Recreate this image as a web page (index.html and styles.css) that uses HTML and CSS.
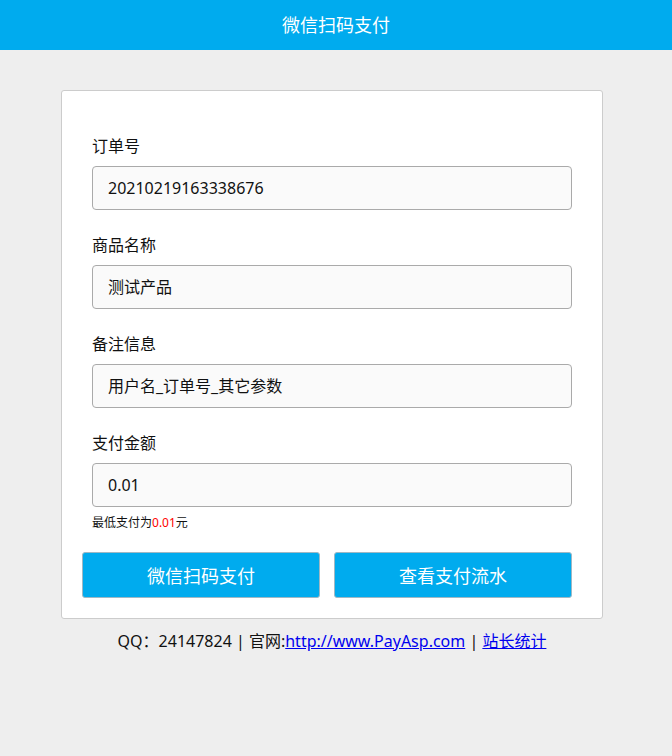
FILE: index.html
```html
<!DOCTYPE html>
<html lang="zh-CN">
<head>
<meta charset="utf-8">
<title>微信扫码支付</title>
<link rel="stylesheet" href="styles.css">
</head>
<body>
<header class="topbar">微信扫码支付</header>
<main class="card">
  <div class="field">
    <label class="label">订单号</label>
    <div class="input">20210219163338676</div>
  </div>
  <div class="field">
    <label class="label">商品名称</label>
    <div class="input">测试产品</div>
  </div>
  <div class="field">
    <label class="label">备注信息</label>
    <div class="input">用户名_订单号_其它参数</div>
  </div>
  <div class="field last">
    <label class="label">支付金额</label>
    <div class="input">0.01</div>
  </div>
  <p class="hint">最低支付为<span class="red">0.01</span>元</p>
  <div class="buttons">
    <button class="btn">微信扫码支付</button>
    <button class="btn">查看支付流水</button>
  </div>
</main>
<footer class="footer">QQ：24147824 | 官网:<a href="#">http://www.PayAsp.com</a> | <a href="#">站长统计</a></footer>
</body>
</html>
```
FILE: styles.css
```css
* { box-sizing: border-box; }
html, body { margin: 0; padding: 0; }
body {
  background: #eeeeee;
  font-family: "Noto Sans", "Noto Sans CJK SC", sans-serif;
  color: #111;
  font-size: 16px;
}
.topbar {
  height: 50px;
  background: #00abee;
  color: #fff;
  font-size: 18px;
  line-height: 50px;
  text-align: center;
}
.card {
  width: 542px;
  margin: 40px 0 0 61px;
  background: #fff;
  border: 1px solid #cccccc;
  border-radius: 3px;
  padding: 45px 30px 20px 20px;
}
.field { margin-left: 10px; margin-bottom: 25px; }
.field.last { margin-bottom: 0; }
.label {
  display: block;
  line-height: 20px;
  height: 20px;
  margin-bottom: 10px;
  font-size: 16px;
}
.input {
  width: 480px;
  height: 44px;
  border: 1px solid #aaaaaa;
  border-radius: 4px;
  background: #fafafa;
  padding-left: 15px;
  line-height: 42px;
  font-size: 16px;
}
.hint {
  margin: 10px 0 0 10px;
  font-size: 12px;
  line-height: 12px;
}
.red { color: #ff0000; }
.buttons {
  display: flex;
  gap: 14px;
  margin-top: 23px;
}
.btn {
  width: 238px;
  height: 46px;
  background: #00abee;
  color: #fff;
  border: 1px solid #9fb8c4;
  border-radius: 3px;
  font-family: "Noto Sans", "Noto Sans CJK SC", sans-serif;
  font-size: 18px;
  padding: 0;
}
.footer {
  width: 542px;
  margin: 11px 0 0 61px;
  text-align: center;
  line-height: 22px;
  font-size: 16px;
}
.footer a { color: #0000ee; }
```
